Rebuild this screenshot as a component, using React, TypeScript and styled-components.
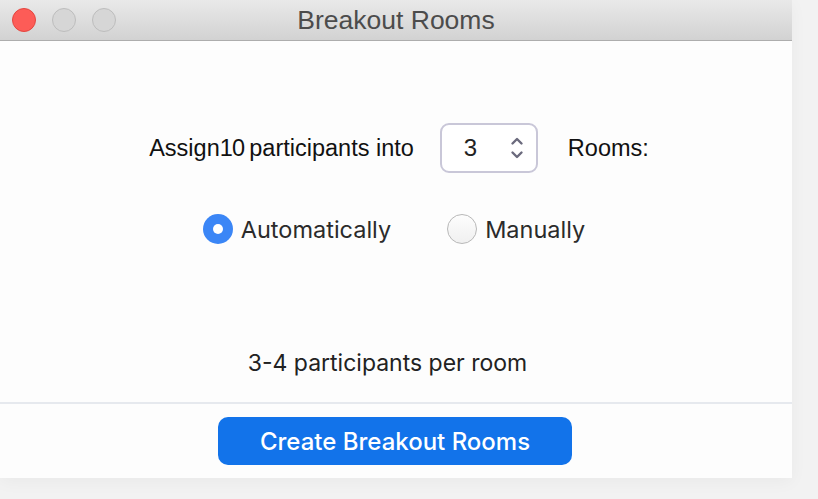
import React from "react";
import styled, { createGlobalStyle } from "styled-components";

const Global = createGlobalStyle`
  html, body { margin: 0; padding: 0; }
  body {
    background: #f1f1f1;
    width: 818px;
    height: 499px;
    overflow: hidden;
    font-family: "Liberation Sans", Arial, sans-serif;
  }
`;

const Page = styled.div`
  width: 818px;
  height: 499px;
  background: #f2f2f2;
`;

const Window = styled.div`
  width: 792px;
  height: 478px;
  background: #fdfdfd;
  display: flex;
  flex-direction: column;
  box-shadow: 0 4px 16px rgba(0, 0, 0, 0.04);
`;

const TitleBar = styled.div`
  height: 40px;
  flex: none;
  position: relative;
  display: flex;
  align-items: center;
  justify-content: center;
  background: linear-gradient(#e9e9e9, #d2d2d2);
  border-bottom: 1px solid #adadad;
`;

const Lights = styled.div`
  position: absolute;
  left: 12px;
  top: 8px;
  display: flex;
  gap: 16px;
`;

const Light = styled.span<{ $red?: boolean }>`
  width: 24px;
  height: 24px;
  border-radius: 50%;
  box-sizing: border-box;
  background: ${(p) => (p.$red ? "#fd5c57" : "#d6d6d6")};
  border: 1px solid ${(p) => (p.$red ? "#e4463f" : "#bdbdbd")};
`;

const Title = styled.div`
  font-family: "Liberation Sans", Arial, sans-serif;
  font-size: 26.5px;
  color: #4c4c4c;
  margin-top: 1px;
`;

const Body = styled.div`
  flex: 1;
  display: flex;
  flex-direction: column;
  align-items: center;
  padding-top: 82px;
`;

const AssignRow = styled.div`
  display: flex;
  align-items: center;
  height: 50px;
  margin-left: 6px;
  font-family: "Liberation Sans", Arial, sans-serif;
  font-size: 23.5px;
  color: #111;
`;

const Count = styled.span`
  letter-spacing: -0.8px;
  margin-right: 5px;
`;

const Stepper = styled.div`
  width: 98px;
  height: 50px;
  box-sizing: border-box;
  margin: 0 30px 0 26px;
  border: 2px solid #c9c7d8;
  border-radius: 9px;
  display: flex;
  align-items: center;
  justify-content: space-between;
  padding: 0 12px 0 22px;
  font-size: 24px;
  color: #222;
  background: #fff;
`;

const RadioRow = styled.div`
  display: flex;
  align-items: center;
  gap: 56px;
  margin-top: 41px;
  margin-left: -4px;
  height: 30px;
`;

const RadioItem = styled.label`
  display: flex;
  align-items: center;
  gap: 8px;
  font-family: Inter, "Noto Sans", sans-serif;
  font-size: 23.5px;
  color: #2b2b2b;
`;

const RadioDot = styled.span<{ $on?: boolean }>`
  width: 30px;
  height: 30px;
  border-radius: 50%;
  box-sizing: border-box;
  display: flex;
  align-items: center;
  justify-content: center;
  background: ${(p) => (p.$on ? "#3b86f6" : "linear-gradient(#fdfdfd, #f0f0f0)")};
  border: ${(p) => (p.$on ? "none" : "1.5px solid #b8b8b8")};
  &::after {
    content: "";
    display: ${(p) => (p.$on ? "block" : "none")};
    width: 10px;
    height: 10px;
    border-radius: 50%;
    background: #fff;
  }
`;

const PerRoom = styled.div`
  margin-top: 106px;
  margin-left: -17px;
  height: 26px;
  line-height: 26px;
  font-family: Inter, "Noto Sans", sans-serif;
  font-size: 23px;
  color: #222;
`;

const Footer = styled.div`
  flex: none;
  height: 76px;
  box-sizing: border-box;
  border-top: 2px solid #e6e9ee;
  display: flex;
  justify-content: center;
  padding-top: 13px;
`;

const CreateButton = styled.button`
  width: 354px;
  height: 48px;
  border: none;
  border-radius: 10px;
  background: #1273ea;
  color: #fff;
  font-family: Inter, "Noto Sans", sans-serif;
  font-size: 24px;
  font-weight: 500;
  padding: 0;
  margin-right: 2px;
`;

const Chevrons = () => (
  <svg width="14" height="26" viewBox="0 0 14 26" fill="none">
    <path d="M2.5 8.5 L7 4 L11.5 8.5" stroke="#6b6a7d" strokeWidth="2.4" strokeLinecap="round" strokeLinejoin="round" />
    <path d="M2.5 17.5 L7 22 L11.5 17.5" stroke="#6b6a7d" strokeWidth="2.4" strokeLinecap="round" strokeLinejoin="round" />
  </svg>
);

export default function App() {
  return (
    <Page>
      <Global />
      <Window>
        <TitleBar>
          <Lights>
            <Light $red />
            <Light />
            <Light />
          </Lights>
          <Title>Breakout Rooms</Title>
        </TitleBar>
        <Body>
          <AssignRow>
            Assign<Count>10</Count>participants into
            <Stepper>
              <span>3</span>
              <Chevrons />
            </Stepper>
            Rooms:
          </AssignRow>
          <RadioRow>
            <RadioItem>
              <RadioDot $on />
              Automatically
            </RadioItem>
            <RadioItem>
              <RadioDot />
              Manually
            </RadioItem>
          </RadioRow>
          <PerRoom>3-4 participants per room</PerRoom>
        </Body>
        <Footer>
          <CreateButton>Create Breakout Rooms</CreateButton>
        </Footer>
      </Window>
    </Page>
  );
}
